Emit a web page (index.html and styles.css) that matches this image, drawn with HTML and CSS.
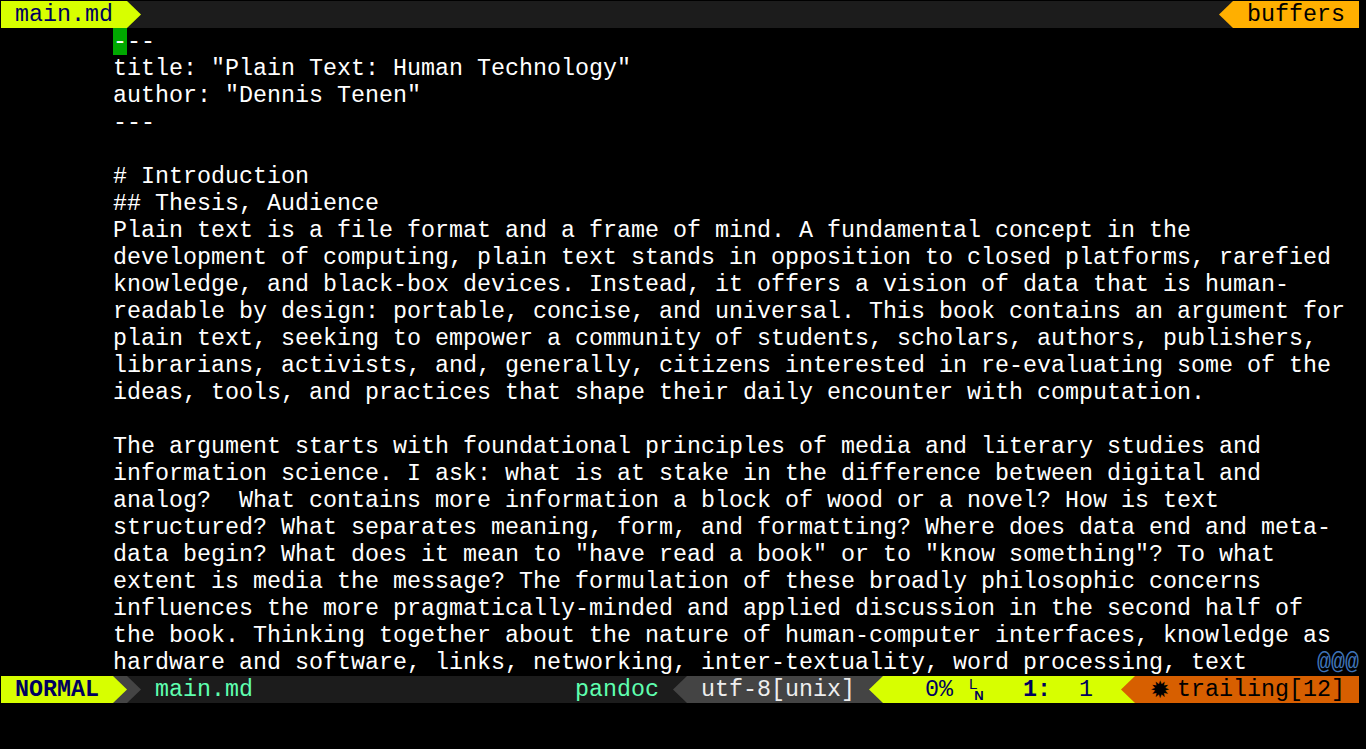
FILE: index.html
```html
<!DOCTYPE html>
<html>
<head>
<meta charset="utf-8">
<link rel="stylesheet" href="styles.css">
</head>
<body>
<div class="screen">
  <div class="tabline">
    <span class="seg tab-sel"> main.md </span>
    <span class="sep bg-fill"><i class="tri-r c-yellow"></i></span>
    <span class="tab-fill"></span>
    <span class="sep bg-fill"><i class="tri-l c-amber"></i></span>
    <span class="seg tab-buffers"> buffers </span>
  </div>

  <div class="buffer">
    <div class="line"><span class="cursor">-</span>--</div>
    <div class="line">title: "Plain Text: Human Technology"</div>
    <div class="line">author: "Dennis Tenen"</div>
    <div class="line">---</div>
    <div class="line"></div>
    <div class="line"># Introduction</div>
    <div class="line">## Thesis, Audience</div>
    <div class="line">Plain text is a file format and a frame of mind. A fundamental concept in the</div>
    <div class="line">development of computing, plain text stands in opposition to closed platforms, rarefied</div>
    <div class="line">knowledge, and black-box devices. Instead, it offers a vision of data that is human-</div>
    <div class="line">readable by design: portable, concise, and universal. This book contains an argument for</div>
    <div class="line">plain text, seeking to empower a community of students, scholars, authors, publishers,</div>
    <div class="line">librarians, activists, and, generally, citizens interested in re-evaluating some of the</div>
    <div class="line">ideas, tools, and practices that shape their daily encounter with computation.</div>
    <div class="line"></div>
    <div class="line">The argument starts with foundational principles of media and literary studies and</div>
    <div class="line">information science. I ask: what is at stake in the difference between digital and</div>
    <div class="line">analog?  What contains more information a block of wood or a novel? How is text</div>
    <div class="line">structured? What separates meaning, form, and formatting? Where does data end and meta-</div>
    <div class="line">data begin? What does it mean to "have read a book" or to "know something"? To what</div>
    <div class="line">extent is media the message? The formulation of these broadly philosophic concerns</div>
    <div class="line">influences the more pragmatically-minded and applied discussion in the second half of</div>
    <div class="line">the book. Thinking together about the nature of human-computer interfaces, knowledge as</div>
    <div class="line last"><span class="last-text">hardware and software, links, networking, inter-textuality, word processing, text</span><span class="nontext">@@@</span></div>
  </div>

  <div class="statusline">
    <span class="seg sec-a"> NORMAL </span>
    <span class="sep bg-b"><i class="tri-r c-yellow"></i></span>
    <span class="sep bg-fill"><i class="tri-r c-b"></i></span>
    <span class="seg sec-c"> main.md</span>
    <span class="seg sec-x">pandoc </span>
    <span class="sep bg-fill"><i class="tri-l c-b"></i></span>
    <span class="seg sec-y"> utf-8[unix] </span>
    <span class="sep bg-b"><i class="tri-l c-yellow"></i></span>
    <span class="seg sec-z">   0% <span class="ln-sym"><span class="ln-l">L</span><span class="ln-n">N</span></span>   <b>1:</b>  1  </span>
    <span class="sep bg-yellow"><i class="tri-l c-orange"></i></span>
    <span class="seg sec-warn"> <span class="star">✹</span>trailing[12] </span>
  </div>

  <div class="cmdline"></div>
</div>
</body>
</html>
```

FILE: styles.css
```css
html, body {
  margin: 0;
  background: #000000;
}

body {
  padding: 1px 0 0 1px;
  height: 748px;
  overflow: hidden;
  font-family: "Liberation Mono", "DejaVu Sans Mono", monospace;
  font-size: 23.333px;
  line-height: 27px;
  color: #ffffff;
}

.screen {
  width: 1358px;
  display: flex;
  flex-direction: column;
}

.seg {
  white-space: pre;
  height: 27px;
  padding-top: 1px;
  box-sizing: border-box;
  display: inline-block;
}

.sep {
  display: inline-block;
  width: 14px;
  height: 27px;
  flex: none;
}

.sep i {
  display: block;
  width: 100%;
  height: 100%;
}

.tri-r { clip-path: polygon(0 0, 100% 50%, 0 100%); }
.tri-l { clip-path: polygon(100% 0, 0 50%, 100% 100%); }

.c-yellow { background: #d7ff00; }
.c-amber { background: #ffaf00; }
.c-b { background: #444444; }
.c-orange { background: #d75f00; }

.bg-fill { background: #1c1c1c; }
.bg-b { background: #444444; }
.bg-yellow { background: #d7ff00; }

/* tabline */
.tabline {
  display: flex;
  height: 27px;
}

.tab-sel {
  background: #d7ff00;
  color: #00005f;
}

.tab-fill {
  flex: 1;
  background: #1c1c1c;
}

.tab-buffers {
  background: #ffaf00;
  color: #000000;
}

/* buffer */
.buffer {
  display: flex;
  flex-direction: column;
}

.line {
  height: 27px;
  padding-top: 1px;
  box-sizing: border-box;
  padding-left: 112px;
  white-space: pre;
  color: #ffffff;
}

.line.last {
  display: flex;
}

.last-text {
  flex: 1;
}

.nontext {
  color: #3f74b8;
}

.cursor {
  display: inline-block;
  vertical-align: top;
  height: 27px;
  margin-top: -1px;
  padding-top: 1px;
  box-sizing: border-box;
  background: #00a800;
  color: #ffffff;
}

/* status line */
.statusline {
  display: flex;
  height: 27px;
}

.sec-a {
  background: #d7ff00;
  color: #00005f;
  font-weight: bold;
}

.sec-c {
  flex: 1;
  background: #1c1c1c;
  color: #5fffaf;
}

.sec-x {
  background: #1c1c1c;
  color: #5fffaf;
}

.sec-y {
  background: #444444;
  color: #eeeeee;
}

.sec-z {
  background: #d7ff00;
  color: #00005f;
}

.sec-z b {
  font-weight: bold;
}

.ln-sym {
  display: inline-flex;
  flex-direction: row;
  width: 14px;
  height: 25px;
  vertical-align: top;
  font-family: "Liberation Sans", sans-serif;
  padding-left: 2px;
  box-sizing: border-box;
}

.ln-l {
  align-self: flex-start;
  margin-top: 1px;
  font-size: 15px;
  line-height: 12px;
  letter-spacing: -3px;
}

.ln-n {
  align-self: flex-end;
  margin-bottom: 1px;
  font-size: 13px;
  line-height: 11px;
  font-weight: bold;
  flex: none;
}

.sec-warn {
  background: #d75f00;
  color: #000000;
}

.star {
  display: inline-block;
  width: 28px;
  font-family: "DejaVu Sans", sans-serif;
  font-size: 24px;
  line-height: 26px;
  padding-left: 1px;
  box-sizing: border-box;
  vertical-align: top;
}

.cmdline {
  height: 27px;
}
```
